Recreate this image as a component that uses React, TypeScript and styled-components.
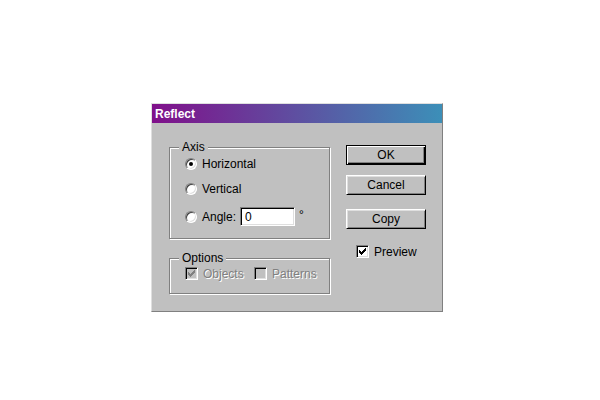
import { FC, ReactNode } from 'react';
import styled, { createGlobalStyle } from 'styled-components';

const GlobalStyle = createGlobalStyle`
  html, body {
    margin: 0;
    padding: 0;
    background: #ffffff;
  }

  body {
    font-family: 'Liberation Sans', Arial, sans-serif;
    font-size: 12px;
    color: #000000;
  }
`;

const Page = styled.div`
  display: flex;
  align-items: flex-start;
  padding: 103px 0 0 151px;
  height: 400px;
  box-sizing: border-box;
`;

const Window = styled.div`
  display: flex;
  flex-direction: column;
  width: 292px;
  height: 209px;
  box-sizing: border-box;
  background: #c0c0c0;
  border: 1px solid;
  border-color: #dfdfdf #808080 #808080 #dfdfdf;
`;

const TitleBar = styled.div`
  display: flex;
  align-items: center;
  height: 19px;
  padding-left: 3px;
  background: linear-gradient(to right, #80108a, #3c8fb8);
  color: #ffffff;
  font-weight: bold;
  font-size: 12px;
`;

const Body = styled.div`
  display: flex;
  gap: 16px;
  padding: 22px 16px 0 17px;
`;

const LeftColumn = styled.div`
  display: flex;
  flex-direction: column;
  gap: 19px;
  width: 161px;
  margin-top: 2px;
`;

const RightColumn = styled.div`
  display: flex;
  flex-direction: column;
  width: 80px;
`;

const Group = styled.div<{ $pad: string }>`
  position: relative;
  display: flex;
  flex-direction: column;
  gap: 11px;
  padding: ${({ $pad }) => $pad};
  border: 1px solid #808080;
  box-shadow: inset 1px 1px 0 #ffffff, 1px 1px 0 #ffffff;
`;

const GroupLabel = styled.span`
  position: absolute;
  top: -8px;
  left: 9px;
  padding: 0 3px;
  background: #c0c0c0;
  line-height: 14px;
`;

const Row = styled.label<{ $height: number }>`
  display: flex;
  align-items: center;
  height: ${({ $height }) => $height}px;
`;

const Radio = styled.span<{ $checked?: boolean }>`
  position: relative;
  width: 12px;
  height: 12px;
  box-sizing: border-box;
  border-radius: 50%;
  background: #ffffff;
  border: 1px solid;
  border-color: #808080 #ffffff #ffffff #808080;
  box-shadow: inset 1px 1px 0 #404040, inset -1px -1px 0 #dfdfdf;
  margin-right: 5px;

  &::after {
    content: '';
    display: ${({ $checked }) => ($checked ? 'block' : 'none')};
    position: absolute;
    left: 3px;
    top: 3px;
    width: 4px;
    height: 4px;
    border-radius: 50%;
    background: #000000;
  }
`;

const AngleLabel = styled.span`
  width: 38px;
`;

const Field = styled.div`
  display: flex;
  align-items: center;
  width: 55px;
  height: 19px;
  box-sizing: border-box;
  padding-left: 4px;
  background: #ffffff;
  border: 1px solid;
  border-color: #808080 #ffffff #ffffff #808080;
  box-shadow: inset 1px 1px 0 #000000, inset -1px -1px 0 #dfdfdf;
`;

const Degree = styled.span`
  margin-left: 4px;
  align-self: flex-start;
  margin-top: 1px;
`;

const CheckRow = styled.label<{ $width?: number }>`
  display: flex;
  align-items: center;
  height: 13px;
  width: ${({ $width }) => ($width ? `${$width}px` : 'auto')};
`;

const Box = styled.span<{ $disabled?: boolean }>`
  display: flex;
  align-items: center;
  justify-content: center;
  width: 13px;
  height: 13px;
  box-sizing: border-box;
  background: ${({ $disabled }) => ($disabled ? '#c0c0c0' : '#ffffff')};
  border: 1px solid;
  border-color: #808080 #ffffff #ffffff #808080;
  box-shadow: inset 1px 1px 0 #000000, inset -1px -1px 0 #dfdfdf;
  margin-right: 5px;
`;

const CheckText = styled.span<{ $disabled?: boolean }>`
  color: ${({ $disabled }) => ($disabled ? '#808080' : '#000000')};
  text-shadow: ${({ $disabled }) => ($disabled ? '1px 1px 0 #ffffff' : 'none')};
`;

const Button = styled.button<{ $default?: boolean }>`
  width: 80px;
  height: 20px;
  box-sizing: border-box;
  padding: 0;
  font: inherit;
  color: #000000;
  background: #c0c0c0;
  border: 1px solid;
  border-color: ${({ $default }) =>
    $default ? '#000000' : '#ffffff #000000 #000000 #ffffff'};
  box-shadow: ${({ $default }) =>
    $default
      ? 'inset 1px 1px 0 #ffffff, inset -1px -1px 0 #000000, inset -2px -2px 0 #808080'
      : 'inset 1px 1px 0 #dfdfdf, inset -1px -1px 0 #808080'};
`;

const PreviewRow = styled(CheckRow)`
  margin: 16px 0 0 10px;
`;

const CheckMark = ({ color }: { color: string }) => (
  <svg width="7" height="7" viewBox="0 0 7 7" shapeRendering="crispEdges">
    <path
      d="M0 2h1v3h-1zM1 3h1v3h-1zM2 4h1v3h-1zM3 3h1v3h-1zM4 2h1v3h-1zM5 1h1v3h-1zM6 0h1v3h-1z"
      fill={color}
    />
  </svg>
);

const Check: FC<{ checked?: boolean; disabled?: boolean; width?: number; children: ReactNode }> = ({
  checked,
  disabled,
  width,
  children,
}) => (
  <CheckRow $width={width}>
    <Box $disabled={disabled}>
      {checked && <CheckMark color={disabled ? '#808080' : '#000000'} />}
    </Box>
    <CheckText $disabled={disabled}>{children}</CheckText>
  </CheckRow>
);

const App: FC = () => (
  <Page>
    <GlobalStyle />
    <Window>
      <TitleBar>Reflect</TitleBar>
      <Body>
        <LeftColumn>
          <Group $pad="9px 0 12px 15px">
            <GroupLabel>Axis</GroupLabel>
            <Row $height={14}>
              <Radio $checked />
              Horizontal
            </Row>
            <Row $height={14}>
              <Radio />
              Vertical
            </Row>
            <Row $height={19}>
              <Radio />
              <AngleLabel>Angle:</AngleLabel>
              <Field>0</Field>
              <Degree>°</Degree>
            </Row>
          </Group>
          <Group $pad="8px 0 13px 15px">
            <GroupLabel>Options</GroupLabel>
            <CheckRow>
              <Check checked disabled width={69}>
                Objects
              </Check>
              <Check disabled>Patterns</Check>
            </CheckRow>
          </Group>
        </LeftColumn>
        <RightColumn>
          <Button $default>OK</Button>
          <Button style={{ marginTop: 10 }}>Cancel</Button>
          <Button style={{ marginTop: 14 }}>Copy</Button>
          <PreviewRow>
            <Box>
              <CheckMark color="#000000" />
            </Box>
            <CheckText>Preview</CheckText>
          </PreviewRow>
        </RightColumn>
      </Body>
    </Window>
  </Page>
);

export default App;
